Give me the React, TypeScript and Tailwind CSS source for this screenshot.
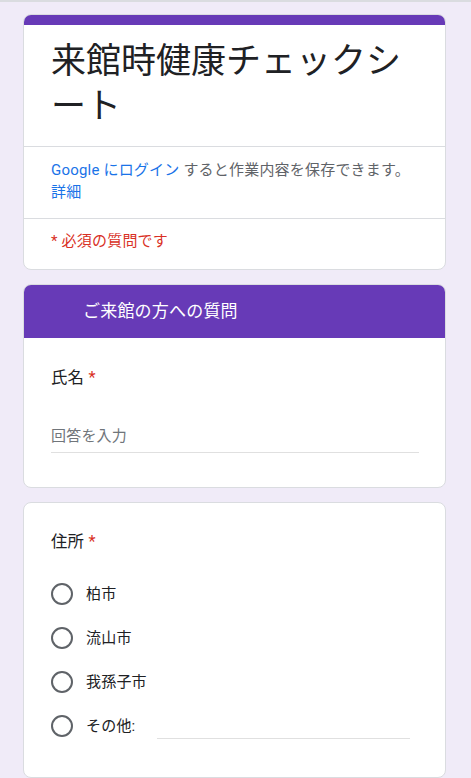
import React from 'react';

const font = { fontFamily: 'Roboto, "Noto Sans CJK JP", "Noto Sans", sans-serif' };

const Radio: React.FC<{ label: string }> = ({ label }) => (
  <div className="flex items-center h-[44px]">
    <span className="w-[22px] h-[22px] rounded-full border-2 border-[#5f6368] shrink-0" />
    <span className="ml-[13px] text-[15px] tracking-[0.2px] text-[#202124]">{label}</span>
  </div>
);

export default function App() {
  return (
    <div
      className="min-h-screen bg-[#f0ebf8] border-t-2 border-[#dadce0] pl-[23px] pr-[25px] pt-[12px] pb-4"
      style={font}
    >
      {/* Header card */}
      <div className="bg-white rounded-lg border border-[#dadce0] overflow-hidden">
        <div className="h-[10px] bg-[#673ab7]" />
        <div className="px-[27px] pt-[14px] pb-[17px]">
          <h1 className="text-[35px] leading-[45px] text-[#202124] font-normal">
            来館時健康チェックシート
          </h1>
        </div>
        <div className="border-t border-[#dadce0] px-[27px] pt-[12px] pb-[15px] text-[15px] leading-[22px] tracking-[0.2px] text-[#5f6368]">
          <span className="text-[#1a73e8]">Google にログイン</span> すると作業内容を保存できます。
          <span className="block text-[#1a73e8]">詳細</span>
        </div>
        <div className="border-t border-[#dadce0] px-[27px] pt-[11px] pb-[17px] text-[15px] leading-[22px] tracking-[0.2px] text-[#d93025]">
          * 必須の質問です
        </div>
      </div>

      {/* Section + name */}
      <div className="mt-[14px] bg-white rounded-lg border border-[#dadce0] overflow-hidden">
        <div className="h-[53px] bg-[#673ab7] flex items-center pl-[59px] text-[17px] tracking-[0.2px] text-white">
          ご来館の方への質問
        </div>
        <div className="px-[27px] pt-[28px] pb-[34px]">
          <div className="text-[16.4px] leading-[24px] tracking-[0.2px] text-[#202124]">
            氏名 <span className="text-[#d93025]">*</span>
          </div>
          <div className="mt-[34px] w-[368px] border-b border-[#e0e0e0] pb-[4px] text-[15px] leading-[24px] tracking-[0.2px] text-[#70757a]">
            回答を入力
          </div>
        </div>
      </div>

      {/* Address */}
      <div className="mt-[14px] bg-white rounded-lg border border-[#dadce0] px-[27px] pt-[27px] pb-[29px]">
        <div className="text-[16.4px] leading-[24px] tracking-[0.2px] text-[#202124]">
          住所 <span className="text-[#d93025]">*</span>
        </div>
        <div className="mt-[18px] flex flex-col">
          <Radio label="柏市" />
          <Radio label="流山市" />
          <Radio label="我孫子市" />
          <div className="flex items-center h-[44px]">
            <span className="w-[22px] h-[22px] rounded-full border-2 border-[#5f6368] shrink-0" />
            <span className="ml-[13px] text-[15px] tracking-[0.2px] text-[#202124]">その他:</span>
            <span className="ml-[22px] mt-[24px] w-[253px] border-b border-[#e0e0e0]" />
          </div>
        </div>
      </div>
    </div>
  );
}
